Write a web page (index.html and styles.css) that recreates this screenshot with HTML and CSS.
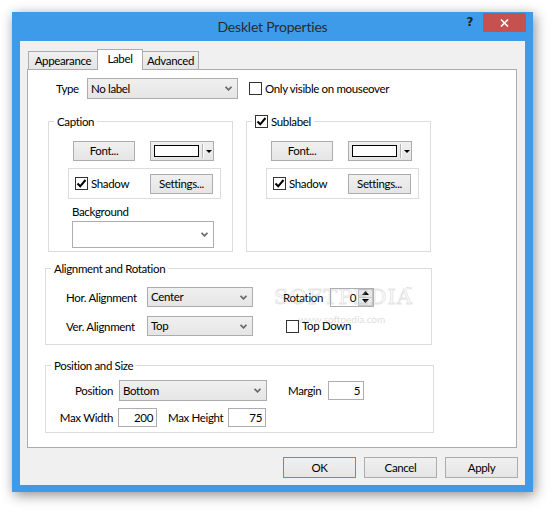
FILE: index.html
```html
<!DOCTYPE html>
<html>
<head>
<meta charset="utf-8">
<link rel="stylesheet" href="styles.css">
</head>
<body>
<div class="window">
  <div class="titlebar">
    <span></span>
    <span class="title">Desklet Properties</span>
    <div class="caption-btns">
      <span class="help">?</span>
      <span class="close"><svg width="9" height="8" viewBox="0 0 9 8"><path d="M1 0.5 L8 7.5 M8 0.5 L1 7.5" stroke="#fff" stroke-width="1.6"/></svg></span>
    </div>
  </div>
  <div class="client">
    <div class="tabs">
      <div class="tab tab-appearance">Appearance</div>
      <div class="tab tab-label active">Label</div>
      <div class="tab tab-advanced">Advanced</div>
    </div>
    <div class="panel">
      <div class="type-row">
        <span class="type-lbl">Type</span>
        <div class="combo type-combo"><span>No label</span><svg class="chev" width="7" height="5" viewBox="0 0 7 5"><path d="M0.5 0.8 L3.5 3.8 L6.5 0.8" fill="none" stroke="#6a6a6a" stroke-width="1.8"/></svg></div>
        <span class="check mouseover-check"></span>
        <span class="check-text">Only visible on mouseover</span>
      </div>

      <div class="groups">
        <div class="group label-group">
          <div class="legend">Caption</div>
          <div class="btn-row">
            <div class="btn font-btn">Font...</div>
            <div class="color-combo"><span class="swatch"></span><span class="sep"></span><span class="tri"></span></div>
          </div>
          <div class="shadow-box">
            <div class="check-line"><span class="check checked"><svg width="11" height="11" viewBox="0 0 11 11"><path d="M1.5 5.5 L4.2 8.3 L9.5 2" fill="none" stroke="#000" stroke-width="2"/></svg></span><span>Shadow</span></div>
            <div class="btn settings-btn">Settings...</div>
          </div>
          <div class="bg-label">Background</div>
          <div class="combo bg-combo"><span></span><svg class="chev" width="7" height="5" viewBox="0 0 7 5"><path d="M0.5 0.8 L3.5 3.8 L6.5 0.8" fill="none" stroke="#6a6a6a" stroke-width="1.8"/></svg></div>
        </div>

        <div class="group label-group">
          <div class="legend"><span class="check checked"><svg width="11" height="11" viewBox="0 0 11 11"><path d="M1.5 5.5 L4.2 8.3 L9.5 2" fill="none" stroke="#000" stroke-width="2"/></svg></span><span>Sublabel</span></div>
          <div class="btn-row">
            <div class="btn font-btn">Font...</div>
            <div class="color-combo"><span class="swatch"></span><span class="sep"></span><span class="tri"></span></div>
          </div>
          <div class="shadow-box">
            <div class="check-line"><span class="check checked"><svg width="11" height="11" viewBox="0 0 11 11"><path d="M1.5 5.5 L4.2 8.3 L9.5 2" fill="none" stroke="#000" stroke-width="2"/></svg></span><span>Shadow</span></div>
            <div class="btn settings-btn">Settings...</div>
          </div>
        </div>
      </div>

      <div class="group align-group">
        <div class="legend">Alignment and Rotation</div>
        <div class="align-row first">
          <span class="align-lbl">Hor. Alignment</span>
          <div class="combo align-combo"><span>Center</span><svg class="chev" width="7" height="5" viewBox="0 0 7 5"><path d="M0.5 0.8 L3.5 3.8 L6.5 0.8" fill="none" stroke="#6a6a6a" stroke-width="1.8"/></svg></div>
          <span class="rot-lbl">Rotation</span>
          <div class="spin">
            <span class="spin-val">0</span>
            <div class="spin-btns">
              <span class="spin-up"><svg width="7" height="4" viewBox="0 0 7 4"><path d="M0 4 L3.5 0 L7 4 Z" fill="#000"/></svg></span>
              <span class="spin-down"><svg width="7" height="4" viewBox="0 0 7 4"><path d="M0 0 L3.5 4 L7 0 Z" fill="#000"/></svg></span>
            </div>
          </div>
        </div>
        <div class="align-row second">
          <span class="align-lbl">Ver. Alignment</span>
          <div class="combo align-combo"><span>Top</span><svg class="chev" width="7" height="5" viewBox="0 0 7 5"><path d="M0.5 0.8 L3.5 3.8 L6.5 0.8" fill="none" stroke="#6a6a6a" stroke-width="1.8"/></svg></div>
          <span class="check topdown-check"></span>
          <span class="check-text">Top Down</span>
        </div>
      </div>

      <div class="group pos-group">
        <div class="legend">Position and Size</div>
        <div class="pos-row first">
          <span class="pos-lbl">Position</span>
          <div class="combo pos-combo"><span>Bottom</span><svg class="chev" width="7" height="5" viewBox="0 0 7 5"><path d="M0.5 0.8 L3.5 3.8 L6.5 0.8" fill="none" stroke="#6a6a6a" stroke-width="1.8"/></svg></div>
          <span class="margin-lbl">Margin</span>
          <div class="field margin-field">5</div>
        </div>
        <div class="pos-row second">
          <span class="pos-lbl">Max Width</span>
          <div class="field width-field">200</div>
          <span class="maxh-lbl">Max Height</span>
          <div class="field height-field">75</div>
        </div>
      </div>
    </div>
    <div class="buttons">
      <div class="btn dlg-btn default">OK</div>
      <div class="btn dlg-btn">Cancel</div>
      <div class="btn dlg-btn">Apply</div>
    </div>
  </div>
  <div class="watermark">
    <span class="wm-big">SOFTPEDIA</span><span class="wm-tm">™</span>
    <span class="wm-small">www.softpedia.com</span>
  </div>
</div>
</body>
</html>
```
FILE: styles.css
```css
* { box-sizing: border-box; }
html, body { margin: 0; padding: 0; }
body {
  width: 553px;
  height: 514px;
  overflow: hidden;
  background: #fff;
  font-family: Lato, "Noto Sans", sans-serif;
  font-size: 11.5px;
  letter-spacing: -0.35px;
  color: #000;
  white-space: nowrap;
}
.window {
  position: relative;
  margin: 12px 0 0 12px;
  width: 521px;
  height: 480px;
  background: #3d9be9;
  padding: 0 8px 7px;
  display: flex;
  flex-direction: column;
  box-shadow: 2px 3px 12px rgba(0, 0, 0, 0.45);
}
.titlebar {
  height: 29px;
  margin: 0 -8px;
  display: grid;
  grid-template-columns: 1fr auto 1fr;
}
.title {
  font-size: 14px;
  letter-spacing: -0.2px;
  line-height: 30px;
  color: #2b2b2b;
}
.caption-btns {
  justify-self: end;
  display: flex;
  align-items: flex-start;
  padding-top: 1px;
  padding-right: 7px;
}
.help {
  width: 20px;
  height: 19px;
  margin-right: 3px;
  font-family: "DejaVu Sans", sans-serif;
  font-weight: bold;
  font-size: 12px;
  letter-spacing: 0;
  line-height: 19px;
  text-align: center;
  color: #222;
}
.close {
  width: 43px;
  height: 19px;
  background: #c75050;
  display: flex;
  align-items: center;
  justify-content: center;
}
.client {
  flex: 1;
  background: #f0f0f0;
  display: flex;
  flex-direction: column;
}
.tabs {
  display: flex;
  align-items: flex-end;
  height: 20px;
  margin: 8px 0 0 8px;
}
.tab {
  height: 18px;
  border: 1px solid #acacac;
  border-bottom: none;
  background: linear-gradient(#f0f0f0, #e5e5e5);
  display: flex;
  align-items: center;
  justify-content: center;
  line-height: 14px;
}
.tab + .tab { margin-left: -1px; }
.tab-appearance { width: 70px; }
.tab-label { width: 46px; }
.tab-advanced { width: 57px; }
.tab.active {
  height: 21px;
  margin-bottom: -1px;
  background: #fff;
  position: relative;
  z-index: 1;
  padding-bottom: 2px;
}
.panel {
  margin-left: 7px;
  width: 490px;
  height: 379px;
  border: 1px solid #acacac;
  background: #fff;
}

/* controls */
.btn {
  border: 1px solid #acacac;
  background: linear-gradient(#f0f0f0, #e5e5e5);
  display: flex;
  align-items: center;
  justify-content: center;
  height: 20px;
  line-height: 14px;
}
.combo {
  border: 1px solid #acacac;
  background: linear-gradient(#f0f0f0, #e5e5e5);
  display: flex;
  align-items: center;
  justify-content: space-between;
  padding: 0 5px 0 3px;
  height: 20px;
  line-height: 14px;
}
.chev { display: block; }
.check {
  width: 13px;
  height: 13px;
  border: 1px solid #333;
  background: #fff;
  display: flex;
  align-items: center;
  justify-content: center;
  flex: none;
}
.check-text { margin-left: 3px; line-height: 14px; }
.check-line { display: flex; align-items: center; gap: 3px; line-height: 14px; }
.field {
  border: 1px solid #abadb3;
  background: #fff;
  height: 19px;
  text-align: right;
  padding-right: 3px;
  line-height: 17px;
}

/* type row */
.type-row {
  display: flex;
  align-items: center;
  height: 21px;
  margin: 8px 0 0 28px;
}
.type-lbl { width: 31px; }
.type-combo { width: 151px; height: 21px; }
.mouseover-check { margin-left: 11px; }

/* groups */
.groups {
  display: flex;
  gap: 13px;
  margin: 22px 0 0 20px;
}
.group {
  border: 1px solid #dcdcdc;
}
.legend {
  margin: -8px 0 0 5px;
  padding: 0 3px;
  background: #fff;
  width: max-content;
  line-height: 15px;
  height: 15px;
  display: flex;
  align-items: center;
  gap: 3px;
}
.label-group { width: 185px; height: 131px; }
.btn-row { display: flex; margin: 12px 0 0 24px; }
.font-btn { width: 62px; }
.color-combo {
  margin-left: 15px;
  width: 64px;
  height: 20px;
  border: 1px solid #acacac;
  background: linear-gradient(#f0f0f0, #e5e5e5);
  display: flex;
  align-items: center;
  padding-left: 3px;
}
.swatch {
  width: 45px;
  height: 12px;
  border: 1px solid #000;
  background: #fff;
}
.sep {
  width: 2px;
  height: 14px;
  margin-left: 3px;
  border-left: 1px solid #b5b5b5;
  border-right: 1px solid #fff;
}
.tri {
  margin-left: 2px;
  width: 0;
  height: 0;
  border-left: 3px solid transparent;
  border-right: 3px solid transparent;
  border-top: 3px solid #000;
}
.shadow-box {
  margin: 7px 0 0 19px;
  width: 153px;
  height: 31px;
  border: 1px solid #dcdcdc;
  display: flex;
  align-items: center;
  justify-content: space-between;
  padding: 0 7px 0 6px;
}
.settings-btn { width: 63px; }
.bg-label { margin: 5px 0 0 23px; line-height: 15px; }
.bg-combo {
  margin: 2px 0 0 23px;
  width: 142px;
  height: 27px;
  background: #fff;
  border-color: #abadb3;
}

/* alignment */
.align-group {
  width: 387px;
  height: 77px;
  margin: 16px 0 0 17px;
}
.align-row {
  display: flex;
  align-items: center;
  height: 20px;
  padding-left: 20px;
}
.align-row.first { margin-top: 11px; }
.align-row.second { margin-top: 9px; }
.align-lbl { width: 81px; }
.align-combo { width: 106px; }
.rot-lbl { margin-left: 30px; width: 47px; }
.spin {
  width: 44px;
  height: 19px;
  border: 1px solid #abadb3;
  background: #fff;
  display: flex;
  align-items: stretch;
}
.spin-val {
  flex: 1;
  text-align: right;
  padding-right: 2px;
  line-height: 17px;
}
.spin-btns {
  width: 15px;
  display: flex;
  flex-direction: column;
}
.spin-btns span {
  flex: 1;
  display: flex;
  align-items: center;
  justify-content: center;
  background: #e8e8e8;
  border: 1px solid #c8c8c8;
}
.spin-btns span + span { border-top: none; }
.topdown-check { margin-left: 33px; }

/* position */
.pos-group {
  width: 389px;
  height: 68px;
  margin: 20px 0 0 17px;
}
.pos-row { display: flex; align-items: center; }
.pos-row.first { margin-top: 7px; height: 21px; }
.pos-row.second { margin-top: 7px; height: 19px; }
.pos-lbl { width: 67px; text-align: right; }
.pos-combo { width: 148px; height: 21px; margin-left: 6px; }
.margin-lbl { margin-left: 21px; width: 40px; }
.margin-field { width: 36px; }
.width-field { width: 39px; margin-left: 5px; }
.maxh-lbl { margin-left: 11px; width: 60px; }
.height-field { width: 38px; }

/* dialog buttons */
.buttons {
  display: flex;
  justify-content: flex-end;
  gap: 8px;
  margin-top: 9px;
  padding-right: 7px;
}
.dlg-btn { width: 73px; height: 21px; }
.dlg-btn.default { border-color: #3399ff; }

/* watermark */
.watermark {
  position: absolute;
  left: 262px;
  top: 273px;
  width: 140px;
  pointer-events: none;
  color: transparent;
  letter-spacing: 0;
}
.wm-big {
  font-family: "DejaVu Serif", serif;
  font-size: 21px;
  letter-spacing: 1px;
  -webkit-text-stroke: 1px rgba(180, 180, 180, 0.35);
}
.wm-tm {
  position: absolute;
  left: 132px;
  top: 0;
  font-size: 8px;
  color: rgba(170, 170, 170, 0.5);
}
.wm-small {
  display: block;
  margin: 4px 0 0 24px;
  font-size: 10px;
  color: rgba(150, 150, 150, 0.35);
}
```
